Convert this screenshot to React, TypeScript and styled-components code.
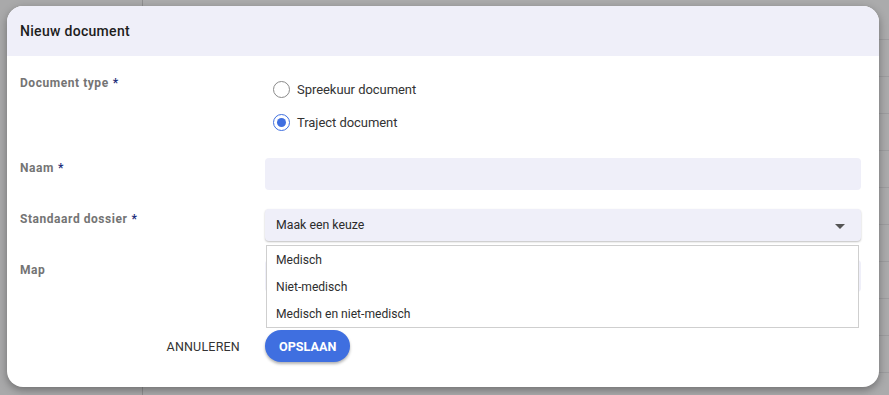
import React from "react";
import styled, { createGlobalStyle } from "styled-components";

const Global = createGlobalStyle`
  html, body { margin: 0; padding: 0; }
  body {
    font-family: Roboto, "Liberation Sans", Arial, sans-serif;
    background: #ababac;
    width: 889px;
    height: 395px;
    overflow: hidden;
  }
  * { box-sizing: border-box; }
`;

const Page = styled.div`
  position: relative;
  width: 889px;
  height: 395px;
  display: grid;
  grid-template-columns: 143px 1fr;
`;

const Sidebar = styled.div`
  border-right: 1px solid #8f8f90;
  background: #a9a9aa;
`;

const Main = styled.div`
  padding-top: 3px;
  display: flex;
  flex-direction: column;
`;

const BgRow = styled.div`
  height: 37px;
  border-bottom: 1px solid #9d9d9f;
`;

const Backdrop = styled.div`
  position: absolute;
  inset: 0;
  padding: 6px 10px 0 7px;
`;

const Modal = styled.div`
  width: 872px;
  height: 381px;
  background: #fff;
  border-radius: 16px;
  overflow: hidden;
  box-shadow: 0 3px 8px rgba(0, 0, 0, 0.35);
  display: flex;
  flex-direction: column;
`;

const Header = styled.div`
  height: 50px;
  background: #efeff9;
  display: flex;
  align-items: center;
  padding: 0 13px;
  font-size: 14px;
  font-weight: 500;
  letter-spacing: 0.3px;
  color: #1d1d1d;
`;

const Body = styled.div`
  padding: 16px 18px 0 13px;
  display: grid;
  grid-template-columns: 245px 1fr;
  align-items: start;
`;

const Label = styled.div<{ $mt?: number }>`
  font-size: 12px;
  font-weight: 700;
  color: #747474;
  line-height: 22px;
  margin-top: ${(p) => p.$mt ?? 0}px;
  letter-spacing: 0.55px;
`;

const Star = styled.span`
  color: #1f2f7a;
  margin-left: 4px;
`;

const Field = styled.div<{ $mt?: number }>`
  position: relative;
  margin-top: ${(p) => p.$mt ?? 0}px;
`;

const RadioGroup = styled.div`
  display: flex;
  flex-direction: column;
  padding-top: 1px;
`;

const RadioRow = styled.label`
  height: 33px;
  display: flex;
  align-items: center;
  gap: 7px;
  padding-left: 8px;
  font-size: 13px;
  color: #333;
  letter-spacing: -0.05px;
`;

const RadioCircle = styled.span<{ $checked?: boolean }>`
  width: 17px;
  height: 17px;
  border-radius: 50%;
  border: 1.5px solid ${(p) => (p.$checked ? "#3f6fe0" : "#8a8a8a")};
  display: flex;
  align-items: center;
  justify-content: center;
  &::after {
    content: "";
    width: 9px;
    height: 9px;
    border-radius: 50%;
    background: ${(p) => (p.$checked ? "#3f6fe0" : "transparent")};
  }
`;

const Input = styled.div`
  height: 32px;
  border-radius: 4px;
  background: #efeff9;
`;

const Select = styled.div`
  height: 32px;
  border-radius: 4px;
  background: #efeff9;
  box-shadow: 0 1px 2px rgba(0, 0, 0, 0.25);
  display: flex;
  align-items: center;
  justify-content: space-between;
  padding: 0 16px 0 11px;
  font-size: 12.3px;
  color: #2b2b2b;
`;

const Caret = styled.span`
  width: 0;
  height: 0;
  border-left: 5px solid transparent;
  border-right: 5px solid transparent;
  border-top: 5px solid #555;
  margin-top: 2px;
`;

const Menu = styled.ul`
  position: absolute;
  top: calc(100% + 4px);
  left: 1px;
  right: 2px;
  margin: 0;
  padding: 0;
  list-style: none;
  background: #fff;
  border: 1px solid #cfcfcf;
  z-index: 2;
`;

const MenuItem = styled.li`
  height: 27px;
  display: flex;
  align-items: center;
  padding-left: 9px;
  font-size: 12.1px;
  color: #2e2e2e;
`;

const Actions = styled.div`
  grid-column: 1 / -1;
  margin-top: 38px;
  display: grid;
  grid-template-columns: 245px auto;
  justify-content: start;
  align-items: center;
`;

const TextButton = styled.button`
  justify-self: end;
  margin-right: 25px;
  background: none;
  border: none;
  padding: 0;
  font-family: inherit;
  font-size: 12.5px;
  letter-spacing: 0.2px;
  color: #333;
`;

const PrimaryButton = styled.button`
  height: 32px;
  padding: 0 14px;
  border: none;
  border-radius: 16px;
  background: #3f6fe0;
  color: #fff;
  font-family: inherit;
  font-size: 12.6px;
  font-weight: 700;
  box-shadow: 0 2px 3px rgba(0, 0, 0, 0.3);
`;

export default function App() {
  return (
    <>
      <Global />
      <Page>
        <Sidebar />
        <Main>
          {Array.from({ length: 11 }).map((_, i) => (
            <BgRow key={i} />
          ))}
        </Main>
        <Backdrop>
          <Modal>
            <Header>Nieuw document</Header>
            <Body>
              <Label>
                Document type<Star>*</Star>
              </Label>
              <RadioGroup>
                <RadioRow>
                  <RadioCircle />
                  Spreekuur document
                </RadioRow>
                <RadioRow>
                  <RadioCircle $checked />
                  Traject document
                </RadioRow>
              </RadioGroup>

              <Label $mt={18}>
                Naam<Star>*</Star>
              </Label>
              <Field $mt={19}>
                <Input />
              </Field>

              <Label $mt={18}>
                Standaard dossier<Star>*</Star>
              </Label>
              <Field $mt={19}>
                <Select>
                  Maak een keuze
                  <Caret />
                </Select>
                <Menu>
                  <MenuItem>Medisch</MenuItem>
                  <MenuItem>Niet-medisch</MenuItem>
                  <MenuItem>Medisch en niet-medisch</MenuItem>
                </Menu>
              </Field>

              <Label $mt={18}>Map</Label>
              <Field $mt={19}>
                <Input />
              </Field>

              <Actions>
                <TextButton>ANNULEREN</TextButton>
                <PrimaryButton>OPSLAAN</PrimaryButton>
              </Actions>
            </Body>
          </Modal>
        </Backdrop>
      </Page>
    </>
  );
}
